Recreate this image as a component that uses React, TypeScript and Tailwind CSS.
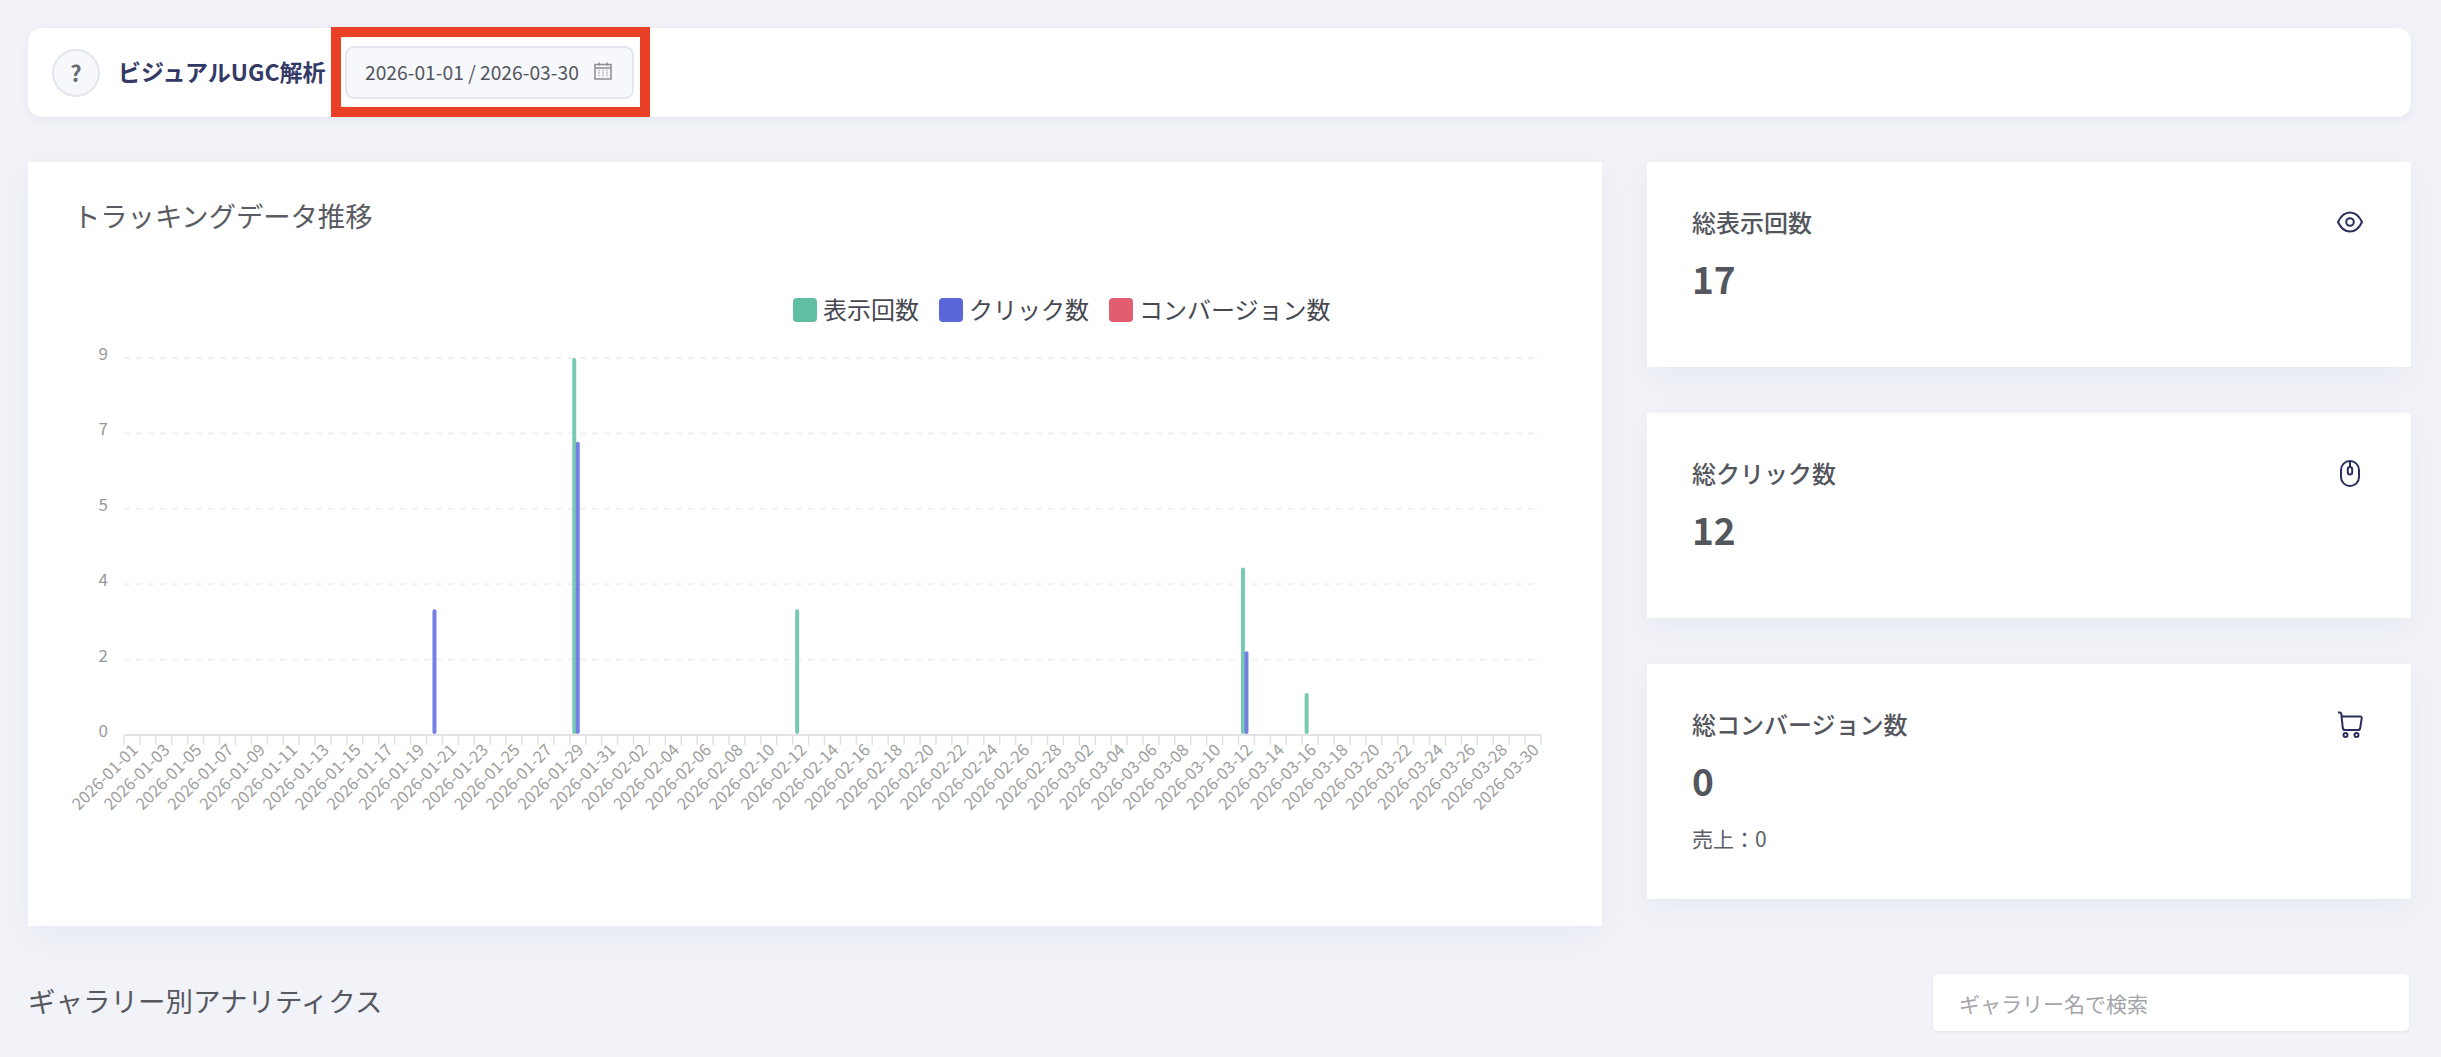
import { Fragment } from 'react';

const AXIS_LEFT = 124;
const AXIS_RIGHT = 1541;
const BASELINE = 735;
const UNIT = 41.9;
const CATEGORY_COUNT = 89;
const STEP = (AXIS_RIGHT - AXIS_LEFT) / CATEGORY_COUNT;
const BAR_OFFSET = 3.5;
const BAR_WIDTH = 4;

const pad = (n: number) => String(n).padStart(2, '0');

const dates = Array.from({ length: CATEGORY_COUNT }, (_, i) => {
  const d = new Date(Date.UTC(2026, 0, 1 + i));
  return `${d.getUTCFullYear()}-${pad(d.getUTCMonth() + 1)}-${pad(d.getUTCDate())}`;
});

const yTicks = [
  { label: '0', y: 735 },
  { label: '2', y: 659.6 },
  { label: '4', y: 584.2 },
  { label: '5', y: 508.8 },
  { label: '7', y: 433.4 },
  { label: '9', y: 358 },
];

// series: 0 = 表示回数, 1 = クリック数
const bars = [
  { index: 19, series: 1, value: 3 },
  { index: 28, series: 0, value: 9 },
  { index: 28, series: 1, value: 7 },
  { index: 42, series: 0, value: 3 },
  { index: 70, series: 0, value: 4 },
  { index: 70, series: 1, value: 2 },
  { index: 74, series: 0, value: 1 },
];

const barColors = ['#78c9b1', '#7180e2'];

const legend = [
  { label: '表示回数', color: '#60bfa3', swatch: 793, text: 823 },
  { label: 'クリック数', color: '#5a67d8', swatch: 939, text: 969 },
  { label: 'コンバージョン数', color: '#e35d70', swatch: 1109, text: 1139 },
];

function Chart() {
  return (
    <svg viewBox="28 270 1574 656" className="block w-[1574px] h-[656px]">
      {legend.map((item) => (
        <Fragment key={item.label}>
          <rect x={item.swatch} y={298} width={24} height={24} rx={4} fill={item.color} />
          <text x={item.text} y={319} fontSize={24} fill="#464850">
            {item.label}
          </text>
        </Fragment>
      ))}

      {yTicks.map((tick) => (
        <Fragment key={tick.label}>
          <line
            x1={AXIS_LEFT}
            x2={AXIS_RIGHT}
            y1={tick.y}
            y2={tick.y}
            stroke="#f1f1f1"
            strokeWidth={2}
            strokeDasharray="6 6"
          />
          <text x={108} y={tick.y + 2} fontSize={17} fill="#999999" textAnchor="end">
            {tick.label}
          </text>
        </Fragment>
      ))}

      <line x1={AXIS_LEFT} x2={AXIS_RIGHT} y1={BASELINE} y2={BASELINE} stroke="#e2e2e2" strokeWidth={2} />
      {Array.from({ length: CATEGORY_COUNT + 1 }, (_, i) => (
        <line
          key={i}
          x1={AXIS_LEFT + i * STEP}
          x2={AXIS_LEFT + i * STEP}
          y1={BASELINE}
          y2={BASELINE + 10}
          stroke="#e2e2e2"
          strokeWidth={1.5}
        />
      ))}

      {dates.map((date, i) =>
        i % 2 === 0 ? (
          <text
            key={date}
            fontSize={16.5}
            fill="#a0a0a0"
            textAnchor="end"
            transform={`translate(${AXIS_LEFT + (i + 0.5) * STEP + 7} ${BASELINE + 16}) rotate(-45)`}
          >
            {date}
          </text>
        ) : null,
      )}

      {bars.map((bar) => (
        <rect
          key={`${bar.index}-${bar.series}`}
          x={AXIS_LEFT + (bar.index + 0.5) * STEP + (bar.series - 1) * BAR_OFFSET - BAR_WIDTH / 2}
          y={BASELINE - bar.value * UNIT}
          width={BAR_WIDTH}
          height={bar.value * UNIT - 1}
          rx={2}
          fill={barColors[bar.series]}
        />
      ))}
    </svg>
  );
}

function EyeIcon() {
  return (
    <svg viewBox="0 0 30 30" className="w-[30px] h-[30px]" fill="none" stroke="#2b2f5c" strokeWidth={2}>
      <path d="M3 15c3-6.500 7.200-9.600 12-9.600S24 8.500 27 15c-3 6.500-7.200 9.600-12 9.600S6 21.500 3 15z" />
      <circle cx={15} cy={15} r={3.800} />
    </svg>
  );
}

function MouseIcon() {
  return (
    <svg viewBox="0 0 30 30" className="w-[30px] h-[30px]" fill="none" stroke="#2b2f5c" strokeWidth={2}>
      <rect x={6} y={3} width={18} height={25} rx={9} />
      <path d="M15 3v6" />
      <rect x={12.800} y={9} width={4.400} height={7.500} rx={2.200} />
    </svg>
  );
}

function CartIcon() {
  return (
    <svg viewBox="0 0 30 30" className="w-[30px] h-[30px]" fill="none" stroke="#2b2f5c" strokeWidth={2}>
      <path d="M3 3.500h1.800c.8 0 1.300.5 1.500 1.300L7.800 19c.2 1.300 1 2 2.200 2h13c1.200 0 2-.7 2.200-2l1.500-9.600c.2-1.300-.5-2-1.700-2H6.600" />
      <circle cx={10.500} cy={26} r={2} />
      <circle cx={21.500} cy={26} r={2} />
    </svg>
  );
}

function CalendarIcon() {
  return (
    <svg viewBox="0 0 18 18" className="w-[18px] h-[18px] mb-[3px]" fill="none" stroke="#8a8d94">
      <rect x={1} y={2.500} width={16} height={14.500} strokeWidth={1.500} />
      <path d="M1 6h16" strokeWidth={1.500} />
      <path d="M5 .5v3M13 .5v3" strokeWidth={1.500} />
      <path
        d="M4.500 8.500h1M8.500 8.500h1M12.500 8.500h1M4.500 11h1M8.500 11h1M12.500 11h1M4.500 13.500h1M8.500 13.500h1M12.500 13.500h1"
        strokeWidth={1.500}
      />
    </svg>
  );
}

interface StatCardProps {
  label: string;
  value: string;
  icon: React.ReactNode;
  sub?: string;
}

function StatCard({ label, value, icon, sub }: StatCardProps) {
  return (
    <div className={`bg-white shadow-[0_10px_30px_rgba(80,90,160,0.06)] pl-[45px] pr-[46px] pt-[42px] ${sub ? 'h-[235px]' : 'h-[205px]'}`}>
      <div className="flex items-center justify-between h-[36px]">
        <span className="text-[24px] font-medium text-[#54565e]">{label}</span>
        {icon}
      </div>
      <div className="text-[37px] font-bold text-[#54565e] leading-[50px] mt-[13px]">{value}</div>
      {sub && <div className="text-[21px] text-[#5c5e66] leading-[30px] mt-[18px]">{sub}</div>}
    </div>
  );
}

export default function App() {
  return (
    <div className="min-h-screen h-[1057px] overflow-hidden bg-[#f1f3f8] pl-[28px] pr-[30px] pt-[28px] font-['Noto_Sans_CJK_JP','Noto_Sans',sans-serif]">
      {/* Header */}
      <div className="relative flex items-center h-[89px] pl-[24px] bg-white rounded-[14px] shadow-[0_3px_10px_rgba(80,90,160,0.07)] mb-[45px]">
        <div className="flex items-center justify-center w-[48px] h-[48px] rounded-full bg-[#f7f8fb] border-2 border-[#e3e6ee] text-[22px] font-bold text-[#686b72]">
          ?
        </div>
        <h1 className="ml-[18px] mb-[2px] w-[207px] whitespace-nowrap text-[23px] font-bold text-[#343a66]">ビジュアルUGC解析</h1>
        <div className="ml-[20px] flex items-center justify-between w-[289px] h-[53px] pl-[18px] pr-[20px] bg-[#f7f8fb] border-2 border-[#e3e6ee] rounded-[9px] text-[19.25px] text-[#54565e]">
          <span>2026-01-01 / 2026-03-30</span>
          <CalendarIcon />
        </div>
        {/* 注釈の赤枠 */}
        <div className="absolute left-[303px] top-[-1px] w-[319px] h-[90px] border-[10px] border-[#ea4025]" />
      </div>

      {/* Chart + stats */}
      <div className="flex gap-[45px] items-start">
        <div className="w-[1574px] h-[764px] bg-white shadow-[0_10px_30px_rgba(80,90,160,0.06)]">
          <div className="h-[108px] pl-[45px] pt-[32px] text-[27.3px] leading-[42px] text-[#5a5c63]">トラッキングデータ推移</div>
          <Chart />
        </div>
        <div className="w-[764px] flex flex-col gap-[46px]">
          <StatCard label="総表示回数" value="17" icon={<EyeIcon />} />
          <StatCard label="総クリック数" value="12" icon={<MouseIcon />} />
          <StatCard label="総コンバージョン数" value="0" icon={<CartIcon />} sub="売上：0" />
        </div>
      </div>

      {/* Gallery section */}
      <div className="flex items-center justify-between mt-[48px] h-[57px]">
        <h2 className="mb-[4px] text-[27.5px] font-normal text-[#56585f]">ギャラリー別アナリティクス</h2>
        <input
          type="text"
          placeholder="ギャラリー名で検索"
          className="w-[476px] h-[57px] px-[26px] mr-[2px] bg-white rounded-[5px] shadow-[0_1px_3px_rgba(80,90,160,0.1)] text-[21px] placeholder:text-[#a3a5ab] outline-none"
        />
      </div>
    </div>
  );
}
